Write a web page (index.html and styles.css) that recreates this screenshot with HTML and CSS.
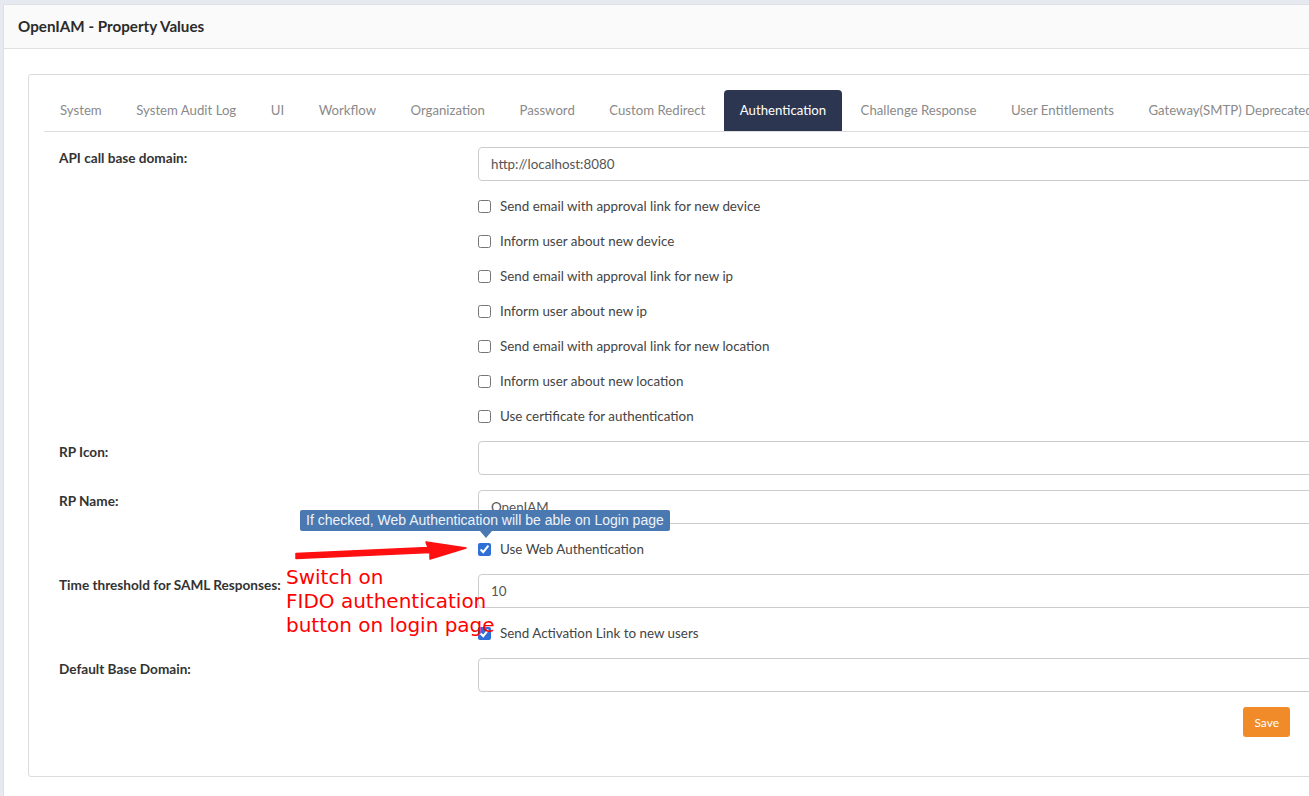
FILE: index.html
```html
<!DOCTYPE html>
<html lang="en">
<head>
    <meta charset="UTF-8" />
    <title>OpenIAM - Property Values</title>
    <link rel="stylesheet" href="styles.css">
</head>
<body>
    <div class="panel">
        <div class="panel-head">OpenIAM - Property Values</div>

        <div class="panel-body">
            <div class="card">
                <ul class="tabs">
                    <li>System</li>
                    <li>System Audit Log</li>
                    <li>UI</li>
                    <li>Workflow</li>
                    <li>Organization</li>
                    <li>Password</li>
                    <li>Custom Redirect</li>
                    <li class="active">Authentication</li>
                    <li>Challenge Response</li>
                    <li>User Entitlements</li>
                    <li>Gateway(SMTP) Deprecated</li>
                </ul>

                <div class="form">
                    <div class="row">
                        <label class="row-label">API call base domain:</label>
                        <input type="text" class="field" value="http://localhost:8080" />
                    </div>

                    <div class="row">
                        <span></span>
                        <label class="check"><input type="checkbox" /> Send email with approval link for new device</label>
                    </div>
                    <div class="row">
                        <span></span>
                        <label class="check"><input type="checkbox" /> Inform user about new device</label>
                    </div>
                    <div class="row">
                        <span></span>
                        <label class="check"><input type="checkbox" /> Send email with approval link for new ip</label>
                    </div>
                    <div class="row">
                        <span></span>
                        <label class="check"><input type="checkbox" /> Inform user about new ip</label>
                    </div>
                    <div class="row">
                        <span></span>
                        <label class="check"><input type="checkbox" /> Send email with approval link for new location</label>
                    </div>
                    <div class="row">
                        <span></span>
                        <label class="check"><input type="checkbox" /> Inform user about new location</label>
                    </div>
                    <div class="row">
                        <span></span>
                        <label class="check"><input type="checkbox" /> Use certificate for authentication</label>
                    </div>

                    <div class="row">
                        <label class="row-label">RP Icon:</label>
                        <input type="text" class="field" value="" />
                    </div>
                    <div class="row">
                        <label class="row-label">RP Name:</label>
                        <input type="text" class="field" value="OpenIAM" />
                    </div>

                    <div class="row">
                        <span></span>
                        <label class="check has-tip">
                            <input type="checkbox" checked /> Use Web Authentication
                            <span class="tip">If checked, Web Authentication will be able on Login page</span>
                        </label>
                    </div>

                    <div class="row">
                        <label class="row-label">Time threshold for SAML Responses:</label>
                        <input type="text" class="field" value="10" />
                    </div>
                    <div class="row">
                        <span></span>
                        <label class="check"><input type="checkbox" checked /> Send Activation Link to new users</label>
                    </div>
                    <div class="row">
                        <label class="row-label">Default Base Domain:</label>
                        <input type="text" class="field" value="" />
                    </div>

                    <div class="actions">
                        <button class="btn-save">Save</button>
                    </div>
                </div>

                <!-- hand drawn note over the form -->
                <svg class="note-arrow" viewBox="0 0 180 26" width="180" height="26">
                    <polygon points="6,15.5 138,9.5 136,4 176,10 140,21 140,14.5 6,20.5" />
                </svg>
                <div class="note-text">Switch on<br>FIDO authentication<br>button on login page</div>
            </div>
        </div>
    </div>
</body>
</html>
```

FILE: styles.css
```css
html, body {
    margin: 0;
    padding: 0;
    height: 100%;
}

body {
    background: #e6e9ef;
    font-family: Lato, 'Open Sans', sans-serif;
    font-size: 13.4px;
    color: #333;
    overflow: hidden;
}

.panel {
    margin: 4px 0 0 3px;
    min-height: 800px;
    background: #ffffff;
    border-top: 1px solid #dde1e6;
    border-left: 1px solid #dde1e6;
}

.panel-head {
    height: 43px;
    line-height: 43px;
    padding: 0 14px;
    background: #fafafa;
    border-bottom: 1px solid #e1e1e1;
    font-weight: 700;
    font-size: 15.2px;
    color: #2b2b2b;
}

.panel-body {
    padding: 25px 0 0 24px;
}

.card {
    position: relative;
    width: 1270px;
    padding: 15px 15px 39px 15px;
    border: 1px solid #dcdcdc;
    border-radius: 3px;
}

/* Tabs */
.tabs {
    display: flex;
    list-style: none;
    margin: 0;
    padding: 0;
    height: 41px;
    border-bottom: 1px solid #dddddd;
    white-space: nowrap;
    font-size: 13.2px;
}

.tabs li {
    padding: 0 16px;
    margin-right: 2.5px;
    line-height: 41px;
    color: #8a8a8a;
    border-radius: 4px 4px 0 0;
}

.tabs li.active {
    background: #2c3650;
    color: #ffffff;
}

/* Form */
.form {
    display: flex;
    flex-direction: column;
    gap: 15px;
    padding: 15px 0 0 15px;
}

.row {
    display: grid;
    grid-template-columns: 419px 1fr;
    align-items: start;
}

.row-label {
    padding-top: 3px;
    font-weight: 700;
    font-size: 13.6px;
    color: #333;
}

.field {
    box-sizing: border-box;
    height: 34px;
    padding: 0 12px;
    border: 1px solid #cccccc;
    border-radius: 4px;
    font-family: Lato, 'Open Sans', sans-serif;
    font-size: 13.4px;
    color: #555;
    outline: none;
}

.check {
    position: relative;
    display: flex;
    align-items: center;
    gap: 9px;
    height: 20px;
    color: #444;
}

.check input {
    width: 13px;
    height: 13px;
    margin: 0;
    accent-color: #2f6fd6;
}

/* Tooltip */
.tip {
    position: absolute;
    left: -178px;
    bottom: 28px;
    padding: 0 6px;
    height: 21px;
    line-height: 21px;
    background: #4a78b1;
    color: #eef3f8;
    font-family: 'Liberation Sans', Arial, sans-serif;
    font-size: 14px;
    white-space: nowrap;
    border-radius: 2px;
}

.tip::after {
    content: "";
    position: absolute;
    left: 180px;
    top: 21px;
    border-left: 6px solid transparent;
    border-right: 6px solid transparent;
    border-top: 7px solid #4a78b1;
}

.actions {
    display: flex;
    justify-content: flex-end;
    padding-right: 24px;
}

.btn-save {
    height: 30px;
    padding: 0 11px;
    background: #f18b2a;
    color: #ffffff;
    border: none;
    border-radius: 3px;
    font-family: Lato, 'Open Sans', sans-serif;
    font-size: 12px;
}

/* Annotation */
.note-arrow {
    position: absolute;
    left: 261px;
    top: 463px;
}

.note-arrow polygon {
    fill: #ff1010;
    stroke: #ff1010;
    stroke-width: 1.5;
    stroke-linejoin: round;
}

.note-text {
    position: absolute;
    left: 257px;
    top: 490px;
    font-family: 'DejaVu Sans', sans-serif;
    font-size: 20px;
    line-height: 24px;
    color: #ff0000;
    white-space: nowrap;
}
```
